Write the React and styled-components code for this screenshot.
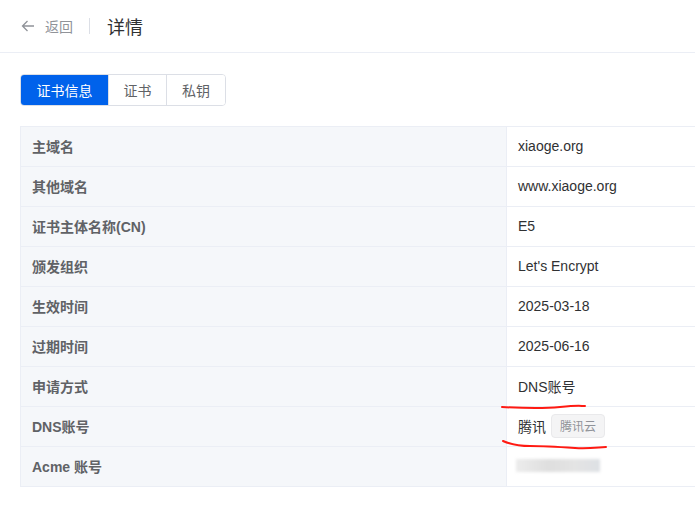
import React from "react"
import styled, { createGlobalStyle } from "styled-components"

const Global = createGlobalStyle`
  html, body {
    margin: 0;
    padding: 0;
    background: #fff;
    overflow: hidden;
  }
  body {
    font-family: "Liberation Sans", "Noto Sans CJK SC", sans-serif;
    color: #303133;
  }
`

const Page = styled.div`
  position: relative;
  width: 695px;
  height: 511px;
  overflow: hidden;
`

const Header = styled.header`
  height: 53px;
  border-bottom: 1px solid #ebeef5;
  display: flex;
  align-items: center;
  padding: 0 0 0 21px;
  box-sizing: border-box;
`

const Back = styled.span`
  display: flex;
  align-items: center;
  gap: 10px;
  color: #909399;
  font-size: 14px;
`

const Divider = styled.span`
  width: 1px;
  height: 16px;
  background: #dcdfe6;
  margin: 0 17px 0 16px;
`

const Title = styled.h1`
  margin: 0;
  font-size: 18px;
  font-weight: 400;
  color: #303133;
`

const Body = styled.main`
  padding: 21px 0 0 20px;
`

const Tabs = styled.div`
  display: inline-flex;
  border: 1px solid #dcdfe6;
  border-radius: 4px;
  overflow: hidden;
  height: 30px;
`

const Tab = styled.button`
  width: ${(p) => p.$w}px;
  padding: 0;
  border: none;
  border-left: ${(p) => (p.$first ? "none" : "1px solid #dcdfe6")};
  background: ${(p) => (p.$active ? "#0062eb" : "#fff")};
  color: ${(p) => (p.$active ? "#fff" : "#606266")};
  font-family: inherit;
  font-size: 14px;
  cursor: pointer;
`

const Table = styled.div`
  margin-top: 20px;
  width: 700px;
  border-top: 1px solid #ebeef5;
  border-left: 1px solid #ebeef5;
`

const Row = styled.div`
  display: grid;
  grid-template-columns: 486px 1fr;
  height: 40px;
  border-bottom: 1px solid #ebeef5;
  box-sizing: border-box;
`

const Label = styled.div`
  background: #f5f7fa;
  border-right: 1px solid #ebeef5;
  display: flex;
  align-items: center;
  padding: 0 0 2px 11px;
  font-size: 14px;
  font-weight: 700;
  color: #606266;
`

const Value = styled.div`
  display: flex;
  align-items: center;
  gap: 5px;
  padding: 0 0 2px 11px;
  font-size: 14px;
  color: #303133;
`

const Tag = styled.span`
  display: inline-flex;
  align-items: center;
  height: 22px;
  padding: 0 8px;
  background: #f4f4f5;
  border: 1px solid #e9e9eb;
  border-radius: 4px;
  color: #909399;
  font-size: 12px;
`

const Blurred = styled.span`
  display: inline-block;
  width: 84px;
  height: 13px;
  background: linear-gradient(90deg, #ececec 0%, #dedede 40%, #e4e4e4 70%, #dde0e4 100%);
  filter: blur(1.5px);
  margin-left: -2px;
`

const Marks = styled.svg`
  position: absolute;
  left: 0;
  top: 0;
  pointer-events: none;
`

const rows = [
  ["主域名", "xiaoge.org"],
  ["其他域名", "www.xiaoge.org"],
  ["证书主体名称(CN)", "E5"],
  ["颁发组织", "Let's Encrypt"],
  ["生效时间", "2025-03-18"],
  ["过期时间", "2025-06-16"],
  ["申请方式", "DNS账号"],
  ["DNS账号", "dns"],
  ["Acme 账号", "acme"],
]

const App = () => (
  <Page>
    <Global />
    <Header>
      <Back>
        <svg width="14" height="14" viewBox="0 0 14 14" fill="none" stroke="#909399" strokeWidth="1.3">
          <path d="M13 7H1.5M6.5 2L1.5 7l5 5" />
        </svg>
        返回
      </Back>
      <Divider />
      <Title>详情</Title>
    </Header>
    <Body>
      <Tabs>
        <Tab $active $first $w={87}>证书信息</Tab>
        <Tab $w={58}>证书</Tab>
        <Tab $w={59}>私钥</Tab>
      </Tabs>
      <Table>
        {rows.map(([k, v]) => (
          <Row key={k}>
            <Label>{k}</Label>
            <Value>
              {v === "dns" ? (
                <>
                  腾讯<Tag>腾讯云</Tag>
                </>
              ) : v === "acme" ? (
                <Blurred />
              ) : (
                v
              )}
            </Value>
          </Row>
        ))}
      </Table>
    </Body>
    <Marks width="695" height="511">
      <path d="M502 407 C520 408 540 409 560 407 S580 406 585 406" stroke="#ff1a12" strokeWidth="2" fill="none" strokeLinecap="round" />
      <path d="M503 441 C510 444 518 446 530 446 S560 447 575 448 S600 447 606 447" stroke="#ff1a12" strokeWidth="2" fill="none" strokeLinecap="round" />
    </Marks>
  </Page>
)

export default App
